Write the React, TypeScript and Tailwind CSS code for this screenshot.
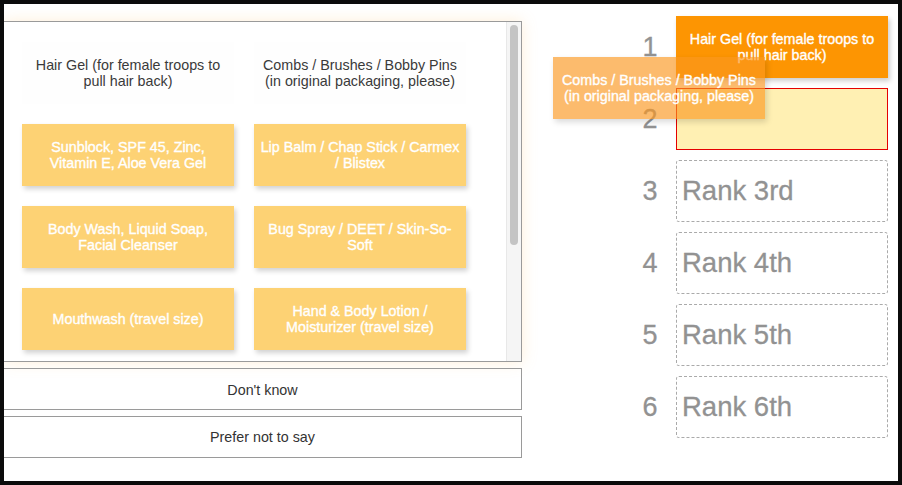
import React from "react";

const cards: string[][] = [
  ["Sunblock, SPF 45, Zinc,", "Vitamin E, Aloe Vera Gel"],
  ["Lip Balm / Chap Stick / Carmex", "/ Blistex"],
  ["Body Wash, Liquid Soap,", "Facial Cleanser"],
  ["Bug Spray / DEET / Skin-So-", "Soft"],
  ["Mouthwash (travel size)"],
  ["Hand & Body Lotion /", "Moisturizer (travel size)"],
];

const headers: string[][] = [
  ["Hair Gel (for female troops to", "pull hair back)"],
  ["Combs / Brushes / Bobby Pins", "(in original packaging, please)"],
];

function Lines({ lines }: { lines: string[] }) {
  return (
    <div className="text-center">
      {lines.map((l, i) => (
        <div key={i} className="whitespace-nowrap">{l}</div>
      ))}
    </div>
  );
}

export default function App() {
  return (
    <div className="w-[902px] h-[485px] border-4 border-[#0b0b0b] bg-white flex overflow-hidden relative font-['Liberation_Sans',Arial,sans-serif]">
      {/* Left column */}
      <div className="w-[518px] shrink-0 pt-[17px] flex flex-col">
        <div className="h-[341px] border border-l-0 border-[#9a9a9a] bg-white flex shadow-[0_0_14px_rgba(255,190,100,0.25)]">
          <div className="flex-1 overflow-hidden pl-[18px] pt-[20px] grid grid-cols-[212px_212px] gap-x-[20px] gap-y-[20px] content-start">
            {headers.map((h, i) => (
              <div key={"h" + i} className="h-[62px] flex items-center justify-center text-[14.3px] leading-[16px] text-[#3a3a3a] bg-[#fefefe]">
                <Lines lines={h} />
              </div>
            ))}
            {cards.map((c, i) => (
              <div key={i} className="h-[62px] flex items-center justify-center text-[14.3px] leading-[16px] text-white [-webkit-text-stroke:0.35px_white] bg-[#fdd274] shadow-[2px_3px_5px_rgba(0,0,0,0.18)]">
                <Lines lines={c} />
              </div>
            ))}
          </div>
          <div className="w-[15px] shrink-0 bg-[#f5f5f5] border-l border-[#e8e8e8]">
            <div className="mt-[3px] mx-auto w-[8px] h-[220px] rounded-full bg-[#c4c4c4]" />
          </div>
        </div>
        <div className="mt-[6px] h-[42px] pt-[3px] border border-l-0 border-[#9a9a9a] flex items-center justify-center text-[14.3px] text-[#333]">
          Don't know
        </div>
        <div className="mt-[6px] h-[42px] pt-[2px] border border-l-0 border-[#9a9a9a] flex items-center justify-center text-[14.3px] text-[#333]">
          Prefer not to say
        </div>
      </div>

      {/* Right column */}
      <div className="ml-[108px] pt-[12px] flex flex-col gap-[10px]">
        <div className="flex items-center h-[62px]">
          <div className="w-[40px] text-center text-[27px] text-[#929292] [-webkit-text-stroke:0.3px_#929292]">1</div>
          <div className="ml-[6px] w-[212px] h-[62px] bg-[#fd9502] text-white [-webkit-text-stroke:0.35px_white] text-[14.3px] leading-[16px] flex items-center justify-center shadow-[2px_3px_5px_rgba(0,0,0,0.2)]">
            <Lines lines={headers[0]} />
          </div>
        </div>
        <div className="flex items-center h-[62px]">
          <div className="w-[40px] text-center text-[27px] text-[#929292] [-webkit-text-stroke:0.3px_#929292]">2</div>
          <div className="ml-[6px] w-[212px] h-[62px] bg-[#fff0b3] border border-[#e50000]" />
        </div>
        {["3rd", "4th", "5th", "6th"].map((r, i) => (
          <div key={r} className="flex items-center h-[62px]">
            <div className="w-[40px] text-center text-[27px] text-[#929292] [-webkit-text-stroke:0.3px_#929292]">{i + 3}</div>
            <div className="ml-[6px] w-[212px] h-[62px] border border-dashed border-[#aaa] rounded-[3px] flex items-center pl-[5px] text-[27.5px] text-[#929292] [-webkit-text-stroke:0.3px_#929292]">
              Rank {r}
            </div>
          </div>
        ))}
      </div>

      {/* Dragged card */}
      <div className="absolute left-[549px] top-[53px] w-[212px] h-[62px] bg-[rgba(250,150,30,0.65)] text-white [-webkit-text-stroke:0.35px_white] text-[14.3px] leading-[16px] flex items-center justify-center shadow-[2px_3px_6px_rgba(0,0,0,0.15)]">
        <Lines lines={headers[1]} />
      </div>
    </div>
  );
}
